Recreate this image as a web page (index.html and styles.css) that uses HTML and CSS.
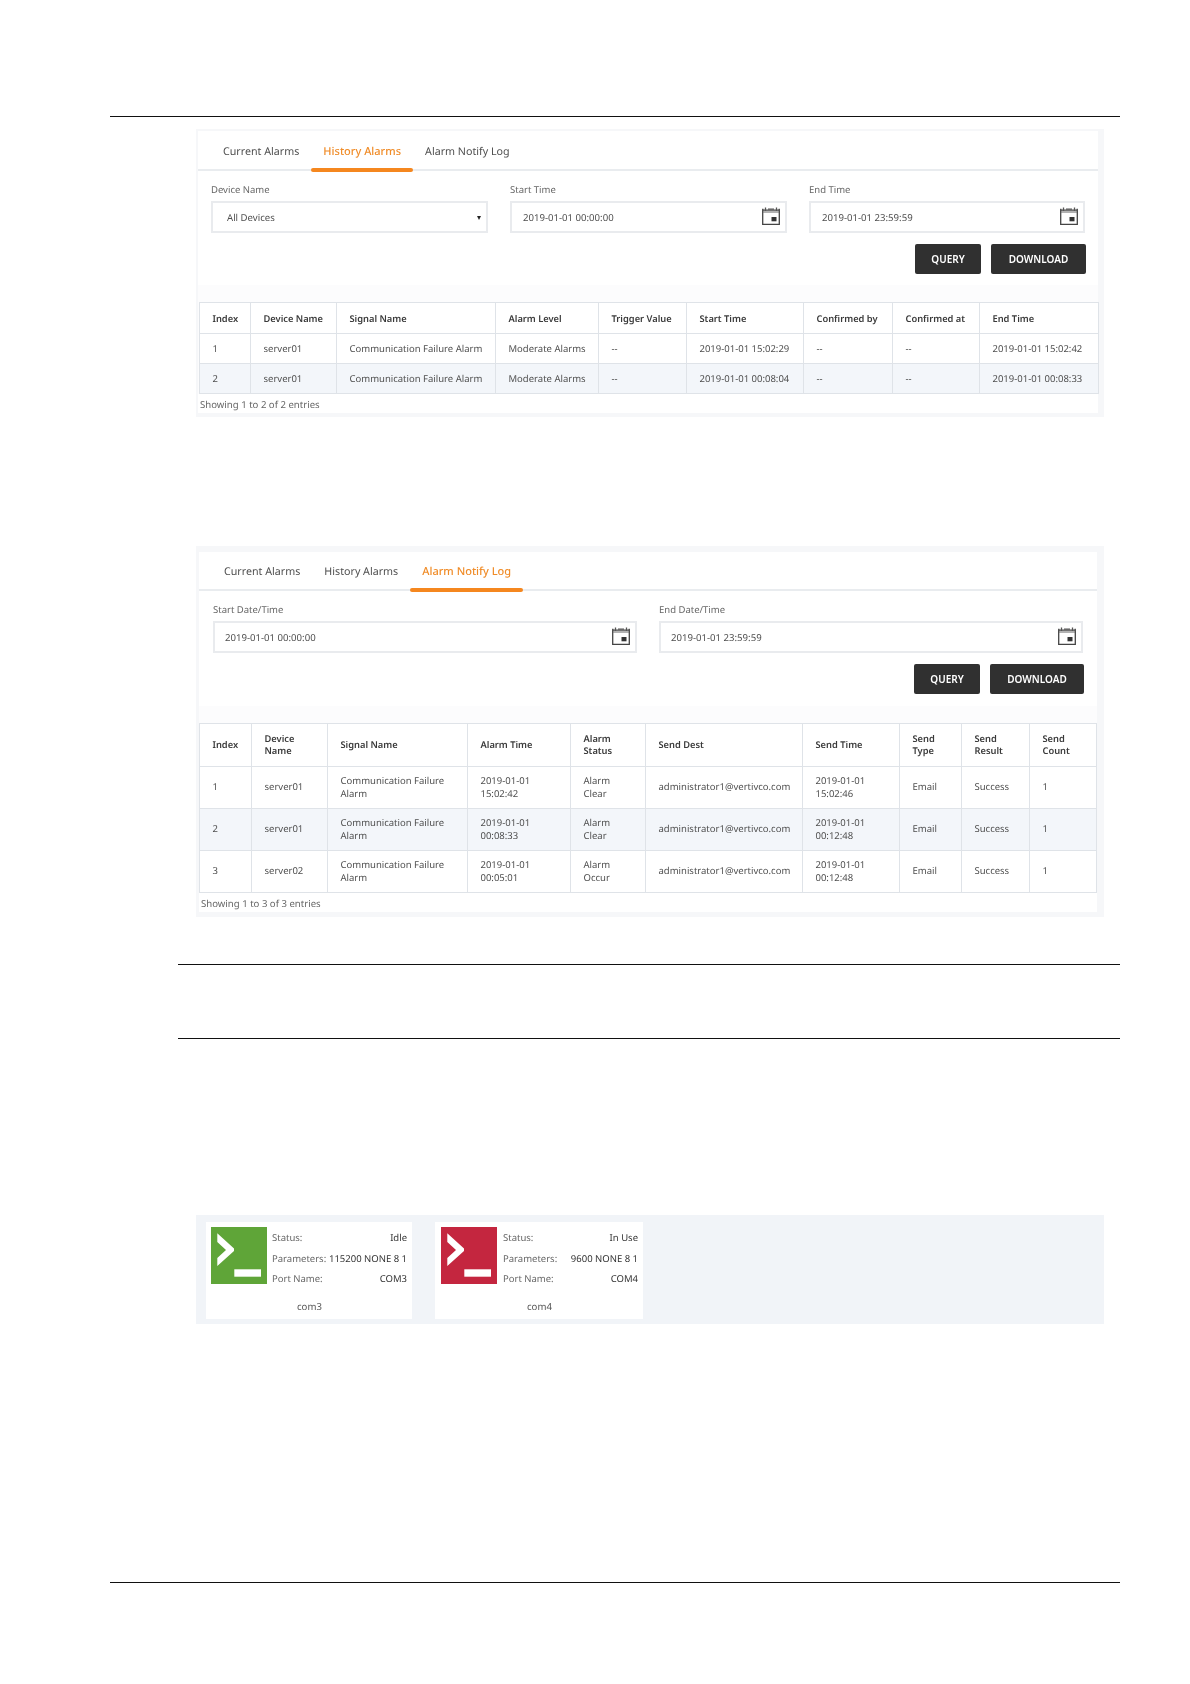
FILE: index.html
```html
<!DOCTYPE html>
<html lang="en">
<head>
<meta charset="utf-8">
<title>Alarms</title>
<link rel="stylesheet" href="styles.css">
</head>
<body>
<svg class="defs" width="0" height="0" aria-hidden="true">
  <symbol id="cal" viewBox="0 0 18 18">
    <path d="M.7 3.2h16.6v14.1H.7z" fill="#fff" stroke="#444" stroke-width="1.3"/>
    <path d="M1 5h16" stroke="#666" stroke-width="1"/>
    <path d="M3.5 .5v3.5M14.5 .5v3.5M0 2.5h1.5M6 2.2h6M16.5 2.5h1.5" stroke="#555" stroke-width="1.3"/>
    <rect x="9.5" y="10" width="5" height="4.3" fill="#333"/>
  </symbol>
  <symbol id="term" viewBox="0 0 56 57">
    <path d="M6.3 6.3 23 21.5V24L6.3 39V31L15 23 6.3 15z" fill="#fff"/>
    <rect x="23.3" y="42.3" width="26.7" height="7.4" fill="#fff"/>
  </symbol>
</svg>
<div class="page">
  <hr class="rule">

  <section class="shot shot-a">
    <div class="tabs">
      <span class="tab">Current Alarms</span>
      <span class="tab active">History Alarms</span>
      <span class="tab">Alarm Notify Log</span>
    </div>
    <div class="content">
      <div class="form">
        <div class="fields fields-3">
          <div class="field"><label class="label">Device Name</label>
            <div class="input select"><span>All Devices</span><span class="caret">▾</span></div></div>
          <div class="field"><label class="label">Start Time</label>
            <div class="input"><span>2019-01-01 00:00:00</span><svg class="cal"><use href="#cal"/></svg></div></div>
          <div class="field"><label class="label">End Time</label>
            <div class="input"><span>2019-01-01 23:59:59</span><svg class="cal"><use href="#cal"/></svg></div></div>
        </div>
        <div class="actions"><button class="btn query">QUERY</button><button class="btn dl">DOWNLOAD</button></div>
      </div>
      <table class="grid grid-a">
        <colgroup><col class="a1"><col class="a2"><col class="a3"><col class="a4"><col class="a5"><col class="a6"><col class="a7"><col class="a8"><col class="a9"></colgroup>
        <thead><tr><th>Index</th><th>Device Name</th><th>Signal Name</th><th>Alarm Level</th><th>Trigger Value</th><th>Start Time</th><th>Confirmed by</th><th>Confirmed at</th><th>End Time</th></tr></thead>
        <tbody>
          <tr><td>1</td><td>server01</td><td>Communication Failure Alarm</td><td>Moderate Alarms</td><td>--</td><td>2019-01-01 15:02:29</td><td>--</td><td>--</td><td>2019-01-01 15:02:42</td></tr>
          <tr><td>2</td><td>server01</td><td>Communication Failure Alarm</td><td>Moderate Alarms</td><td>--</td><td>2019-01-01 00:08:04</td><td>--</td><td>--</td><td>2019-01-01 00:08:33</td></tr>
        </tbody>
      </table>
      <div class="foot">Showing 1 to 2 of 2 entries</div>
    </div>
  </section>

  <section class="shot shot-b">
    <div class="tabs">
      <span class="tab">Current Alarms</span>
      <span class="tab">History Alarms</span>
      <span class="tab active">Alarm Notify Log</span>
    </div>
    <div class="content">
      <div class="form">
        <div class="fields fields-2">
          <div class="field"><label class="label">Start Date/Time</label>
            <div class="input"><span>2019-01-01 00:00:00</span><svg class="cal"><use href="#cal"/></svg></div></div>
          <div class="field"><label class="label">End Date/Time</label>
            <div class="input"><span>2019-01-01 23:59:59</span><svg class="cal"><use href="#cal"/></svg></div></div>
        </div>
        <div class="actions"><button class="btn query">QUERY</button><button class="btn dl">DOWNLOAD</button></div>
      </div>
      <table class="grid grid-b">
        <colgroup><col class="b1"><col class="b2"><col class="b3"><col class="b4"><col class="b5"><col class="b6"><col class="b7"><col class="b8"><col class="b9"><col class="b10"></colgroup>
        <thead><tr><th>Index</th><th>Device<br>Name</th><th>Signal Name</th><th>Alarm Time</th><th>Alarm<br>Status</th><th>Send Dest</th><th>Send Time</th><th>Send<br>Type</th><th>Send<br>Result</th><th>Send<br>Count</th></tr></thead>
        <tbody>
          <tr><td>1</td><td>server01</td><td>Communication Failure<br>Alarm</td><td>2019-01-01<br>15:02:42</td><td>Alarm<br>Clear</td><td>administrator1@vertivco.com</td><td>2019-01-01<br>15:02:46</td><td>Email</td><td>Success</td><td>1</td></tr>
          <tr><td>2</td><td>server01</td><td>Communication Failure<br>Alarm</td><td>2019-01-01<br>00:08:33</td><td>Alarm<br>Clear</td><td>administrator1@vertivco.com</td><td>2019-01-01<br>00:12:48</td><td>Email</td><td>Success</td><td>1</td></tr>
          <tr><td>3</td><td>server02</td><td>Communication Failure<br>Alarm</td><td>2019-01-01<br>00:05:01</td><td>Alarm<br>Occur</td><td>administrator1@vertivco.com</td><td>2019-01-01<br>00:12:48</td><td>Email</td><td>Success</td><td>1</td></tr>
        </tbody>
      </table>
      <div class="foot">Showing 1 to 3 of 3 entries</div>
    </div>
  </section>

  <div class="note"></div>

  <section class="ports">
    <article class="card card-1">
      <div class="card-top">
        <svg class="term idle"><use href="#term"/></svg>
        <dl class="info">
          <div class="row"><dt>Status:</dt><dd>Idle</dd></div>
          <div class="row"><dt>Parameters:</dt><dd>115200 NONE 8 1</dd></div>
          <div class="row"><dt>Port Name:</dt><dd>COM3</dd></div>
        </dl>
      </div>
      <div class="card-name">com3</div>
    </article>
    <article class="card card-2">
      <div class="card-top">
        <svg class="term busy"><use href="#term"/></svg>
        <dl class="info">
          <div class="row"><dt>Status:</dt><dd>In Use</dd></div>
          <div class="row"><dt>Parameters:</dt><dd>9600 NONE 8 1</dd></div>
          <div class="row"><dt>Port Name:</dt><dd>COM4</dd></div>
        </dl>
      </div>
      <div class="card-name">com4</div>
    </article>
  </section>

  <hr class="rule rule-end">
</div>
</body>
</html>
```
FILE: styles.css
```css
* { box-sizing: border-box; }
html, body { margin: 0; padding: 0; background: #fff; }
body { font-family: "Noto Sans", "Open Sans", sans-serif; color: #555; font-size: 9.5px; height: 1684px; overflow: hidden; text-rendering: geometricPrecision; }
.defs { position: absolute; }
.page { padding: 116px 70px 0 110px; }
.rule { margin: 0; border: 0; border-top: 1px solid #111; height: 1px; }
.rule-end { margin-top: 258px; }

.shot { margin-left: 86px; width: 908px; background: #f6f7f9; filter: blur(0.3px); }
.shot-a { margin-top: 12px; padding: 2px 6px 4px 2px; }
.shot-b { margin-top: 129px; padding: 6px 7px 5px 3px; }

.tabs { display: flex; height: 40px; padding-left: 13px; background: #fff; border-bottom: 2px solid #e9ecef; }
.shot-b .tabs { height: 39px; }
.tab { position: relative; padding: 0 12px; font-size: 10.7px; line-height: 42px; color: #4f4f4f; white-space: nowrap; }
.shot-b .tab { line-height: 40px; }
.tab.active { color: #f08c28; font-size: 11px; font-weight: 500; line-height: 41px; }
.shot-b .tab.active { line-height: 39px; }
.tab.active::after { content: ""; position: absolute; left: 0; right: 0; bottom: -3px; height: 4px; border-radius: 2px; background: #f5871f; }

.content { background: #fcfcfd; }
.form { background: #fff; padding: 13px 13px 12px; height: 114px; }
.shot-b .form { padding: 13px 14px 12px; height: 115px; }
.fields { display: grid; column-gap: 22px; }
.fields-3 { grid-template-columns: 277px 277px 276px; }
.fields-2 { grid-template-columns: 424px 424px; }
.label { display: block; font-size: 9.5px; line-height: 12px; color: #666; margin-bottom: 5px; }
.input { display: flex; align-items: center; justify-content: space-between; height: 32px; border: 2px solid #e9ebee; background: #fff; padding: 0 5px 0 11px; font-size: 9.6px; color: #4f4f4f; }
.shot-b .input { padding-left: 10px; }
.select { padding: 0 5px 0 14px; }
.input span:first-child { position: relative; top: 0.5px; }
.caret { font-size: 8px; color: #222; }
.cal { width: 18px; height: 18px; margin-top: -2px; }
.actions { display: flex; justify-content: flex-end; gap: 10px; margin-top: 11px; margin-right: -1px; }
.btn { height: 30px; border: 0; border-radius: 2px; background: #303030; color: #fff; font: 600 10px "Noto Sans", sans-serif; padding: 0; }
.query { width: 66px; }
.dl { width: 95px; }
.shot-b .dl { width: 94px; }

.grid { border-collapse: collapse; table-layout: fixed; background: #fff; color: #4f4f4f; }
.grid-a { width: 899px; margin: 17px 0 0 1px; }
.grid-b { width: 897px; margin: 17px 0 0 0; }
.a1 { width: 51px; } .a2 { width: 86px; } .a3 { width: 159px; } .a4 { width: 103px; } .a5 { width: 88px; } .a6 { width: 117px; } .a7 { width: 89px; } .a8 { width: 87px; } .a9 { width: 119px; }
.b1 { width: 52px; } .b2 { width: 76px; } .b3 { width: 140px; } .b4 { width: 103px; } .b5 { width: 75px; } .b6 { width: 157px; } .b7 { width: 97px; } .b8 { width: 62px; } .b9 { width: 68px; } .b10 { width: 67px; }
.grid th, .grid td { border: 1px solid #dfe3e8; padding: 0 0 0 12.5px; text-align: left; font-size: 9.5px; line-height: 12px; white-space: nowrap; overflow: hidden; }
.grid-b th, .grid-b td { line-height: 12.4px; }
.grid th { font-size: 9.3px; font-weight: 600; color: #3a3a3a; }
.grid-a th { height: 31px; padding-top: 1px; }
.grid-a td { height: 30px; }
.grid-b th { height: 43px; }
.grid-b td { height: 42px; }
.grid tbody tr:nth-child(2) { background: #f3f6fa; }
.foot { background: #fff; font-size: 9.6px; line-height: 21px; height: 19px; padding-left: 2px; color: #666; }

.note { margin: 47px 0 0 68px; height: 75px; border-top: 1px solid #111; border-bottom: 1px solid #111; }

.ports { display: flex; gap: 23px; margin: 176px 0 0 86px; width: 908px; height: 109px; padding: 7px 10px 5px; background: #f1f4f8; filter: blur(0.3px); }
.card { width: 206px; background: #fff; padding: 5px; color: #555; }
.card-2 { width: 208px; padding-left: 6px; }
.card-top { display: flex; gap: 5px; }
.card-2 .card-top { gap: 6px; }
.term { flex: none; width: 56px; height: 57px; }
.idle { background: #5fa538; }
.busy { background: #c4263f; }
.info { flex: 1; margin: 1px 0 0; }
.row { display: flex; justify-content: space-between; height: 20.5px; line-height: 20px; font-size: 9.5px; white-space: nowrap; }
.row dt { color: #666; }
.row dd { margin: 0; color: #333; }
.card-name { margin-top: 10px; padding-left: 86px; font-size: 9.6px; line-height: 14px; color: #555; }
```
